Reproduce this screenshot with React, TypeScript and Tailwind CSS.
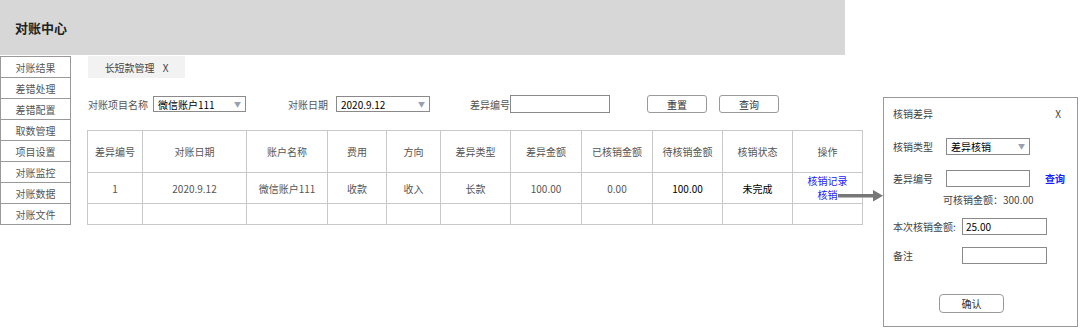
import React from 'react';

const font = { fontFamily: '"Noto Sans CJK SC", "Liberation Sans", sans-serif' };

const menu = ['对账结果', '差错处理', '差错配置', '取数管理', '项目设置', '对账监控', '对账数据', '对账文件'];

const cols = [
  { title: '差异编号', w: 'w-[55px]', val: '1' },
  { title: '对账日期', w: 'w-[104px]', val: '2020.9.12' },
  { title: '账户名称', w: 'w-[81px]', val: '微信账户111' },
  { title: '费用', w: 'w-[59px]', val: '收款' },
  { title: '方向', w: 'w-[54px]', val: '收入' },
  { title: '差异类型', w: 'w-[70px]', val: '长款' },
  { title: '差异金额', w: 'w-[71px]', val: '100.00' },
  { title: '已核销金额', w: 'w-[71px]', val: '0.00' },
  { title: '待核销金额', w: 'w-[70px]', val: '100.00', strong: true },
  { title: '核销状态', w: 'w-[70px]', val: '未完成', strong: true },
  { title: '操作', w: 'w-[70px]', val: '' },
];

const Caret = () => <span className="text-[7px] text-gray-400 leading-none">▼</span>;

const Select = ({ value, className }: { value: string; className: string }) => (
  <div className={`shrink-0 flex items-center justify-between border border-[#8a8a8a] pl-1 pr-[4px] text-[10px] text-black ${className}`}>
    <span>{value}</span>
    <Caret />
  </div>
);

export default function App() {
  return (
    <div className="relative flex w-[1080px] h-[330px] bg-white text-[10px] text-[#555]" style={font}>
      {/* left part */}
      <div className="shrink-0 flex flex-col w-[845px]">
        <div className="h-[55px] bg-[#d7d7d7] flex items-center pl-[15px] text-[13px] font-bold text-[#222]">对账中心</div>
        <div className="flex mt-px">
          <div className="shrink-0 w-[71px] border border-[#999] border-t-0 flex flex-col self-start">
            {menu.map((m) => (
              <div key={m} className="h-[21px] flex items-center justify-center border-t border-[#999]">{m}</div>
            ))}
          </div>
          <div className="shrink-0 pl-[17px]">
            <div className="w-[97px] h-[22px] bg-[#f2f2f2] flex items-center justify-center gap-2 text-[#444]">
              <span>长短款管理</span>
              <span>X</span>
            </div>
            <div className="flex items-center h-[18px] mt-[17px]">
              <span className="shrink-0">对账项目名称</span>
              <Select value="微信账户111" className="ml-[5px] w-[93px] h-[16px]" />
              <span className="shrink-0 ml-[42px]">对账日期</span>
              <Select value="2020.9.12" className="ml-[8px] w-[94px] h-[16px]" />
              <span className="shrink-0 ml-[40px]">差异编号</span>
              <div className="shrink-0 w-[100px] h-[18px] border border-[#8a8a8a]"></div>
              <div className="shrink-0 ml-[37px] w-[60px] h-[18px] rounded-[3px] border border-[#999] flex items-center justify-center text-[#333]">重置</div>
              <div className="shrink-0 ml-[12px] w-[60px] h-[18px] rounded-[3px] border border-[#999] flex items-center justify-center text-[#333]">查询</div>
            </div>
            <div className="mt-[17px] -ml-px w-[776px] border-l border-t border-[#c8c8c8]">
              <div className="flex h-[42px]">
                {cols.map((c) => (
                  <div key={c.title} className={`${c.w} shrink-0 border-r border-b border-[#c8c8c8] flex items-center justify-center`}>{c.title}</div>
                ))}
              </div>
              <div className="flex h-[31px]">
                {cols.map((c) => (
                  <div key={c.title} className={`${c.w} shrink-0 border-r border-b border-[#c8c8c8] flex flex-col items-center justify-center ${c.strong ? 'text-black' : ''}`}>
                    {c.title === '操作' ? (
                      <>
                        <span className="text-[#1a1aff] leading-[14px]">核销记录</span>
                        <span className="text-[#1a1aff] leading-[14px]">核销</span>
                      </>
                    ) : (
                      c.val
                    )}
                  </div>
                ))}
              </div>
              <div className="flex h-[21px]">
                {cols.map((c) => (
                  <div key={c.title} className={`${c.w} shrink-0 border-r border-b border-[#c8c8c8]`}></div>
                ))}
              </div>
            </div>
          </div>
        </div>
      </div>

      {/* arrow */}
      <svg className="absolute left-[838px] top-[189px]" width="46" height="14" viewBox="0 0 46 14">
        <rect x="0" y="5" width="36" height="3.5" fill="#777" />
        <polygon points="35,1 45,6.75 35,12.5" fill="#777" />
      </svg>

      {/* dialog */}
      <div className="shrink-0 ml-[38px] mt-[97px] w-[195px] h-[230px] border border-[#999] text-[#444] flex flex-col px-[9px]">
        <div className="flex items-center justify-between mt-[8px] h-[14px]">
          <span>核销差异</span>
          <span className="mr-[7px]">X</span>
        </div>
        <div className="flex items-center mt-[18px] h-[17px]">
          <span className="w-[53px] shrink-0">核销类型</span>
          <Select value="差异核销" className="w-[84px] h-[17px]" />
        </div>
        <div className="flex items-center mt-[15px] h-[17px]">
          <span className="w-[53px] shrink-0">差异编号</span>
          <div className="shrink-0 w-[84px] h-[17px] border border-[#8a8a8a]"></div>
          <span className="ml-[15px] text-[#1a1aff] font-bold">查询</span>
        </div>
        <div className="ml-[50px] mt-[5px]">可核销金额：300.00</div>
        <div className="flex items-center mt-[11px] h-[17px]">
          <span className="w-[69px] shrink-0">本次核销金额:</span>
          <div className="shrink-0 w-[85px] h-[17px] border border-[#8a8a8a] flex items-center pl-[3px] text-black">25.00</div>
        </div>
        <div className="flex items-center mt-[12px] h-[17px]">
          <span className="w-[69px] shrink-0">备注</span>
          <div className="shrink-0 w-[85px] h-[17px] border border-[#8a8a8a]"></div>
        </div>
        <div className="ml-[46px] mt-[30px] w-[65px] h-[19px] rounded-[4px] border border-[#999] flex items-center justify-center text-[#333]">确认</div>
      </div>
    </div>
  );
}
